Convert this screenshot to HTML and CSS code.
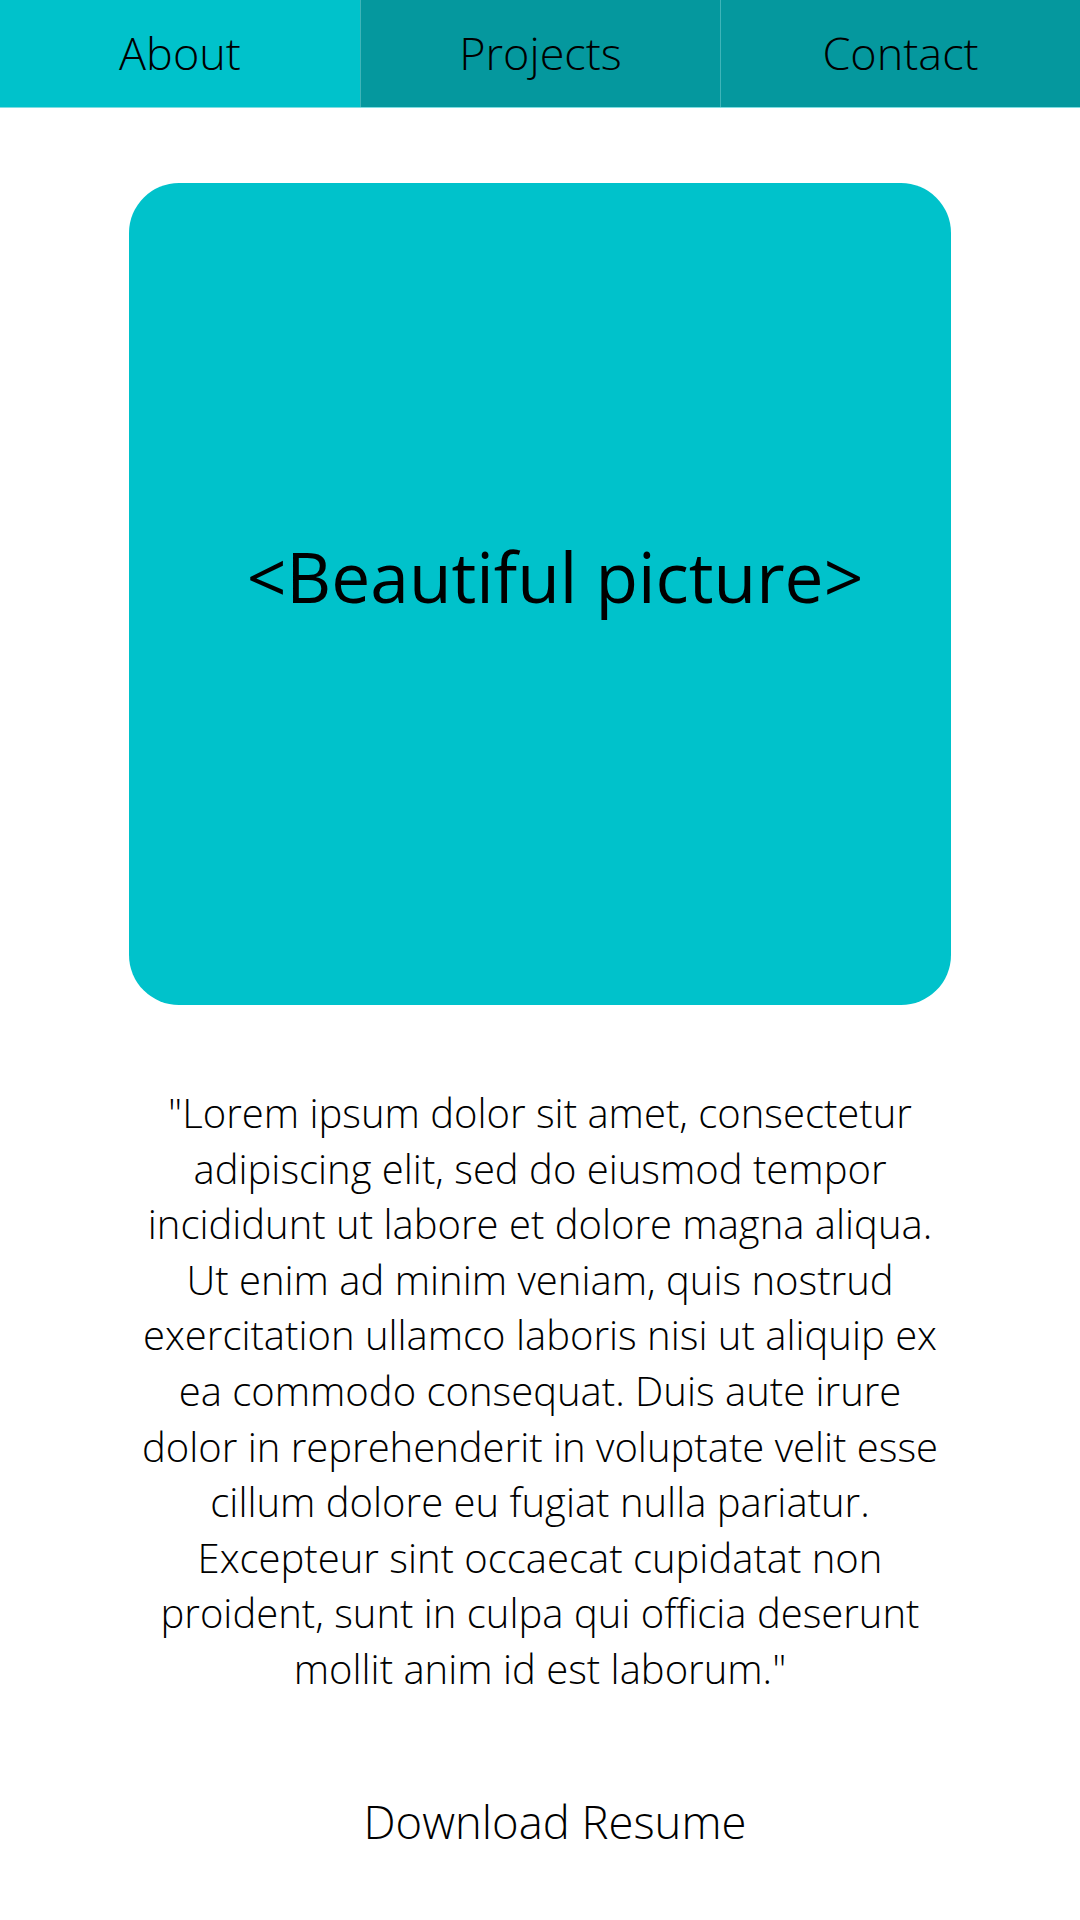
FILE: index.html
```html
<!DOCTYPE html>
<html lang="en">
<head>
<meta charset="utf-8">
<title>Portfolio</title>
<link rel="stylesheet" href="styles.css">
</head>
<body>
<nav class="nav">
  <a class="tab tab-active" href="#">About</a>
  <a class="tab" href="#">Projects</a>
  <a class="tab" href="#">Contact</a>
</nav>
<main class="main">
  <div class="picture"><span class="picture-label">&lt;Beautiful picture&gt;</span></div>
  <p class="quote">"Lorem ipsum dolor sit amet, consectetur adipiscing elit, sed do eiusmod tempor incididunt ut labore et dolore magna aliqua. Ut enim ad minim veniam, quis nostrud exercitation ullamco laboris nisi ut aliquip ex ea commodo consequat. Duis aute irure dolor in reprehenderit in voluptate velit esse cillum dolore eu fugiat nulla pariatur. Excepteur sint occaecat cupidatat non proident, sunt in culpa qui officia deserunt mollit anim id est laborum."</p>
  <a class="download" href="#">Download Resume</a>
</main>
</body>
</html>
```

FILE: styles.css
```css
* { box-sizing: border-box; }
html, body {
  margin: 0;
  padding: 0;
  background: #ffffff;
  font-family: "Open Sans", "Noto Sans", sans-serif;
  color: #000;
}
.nav {
  display: grid;
  grid-template-columns: repeat(3, 1fr);
  height: 108px;
  border-bottom: 1px solid #7fdde2;
}
.tab {
  display: flex;
  align-items: center;
  justify-content: center;
  background: #05989e;
  color: #000;
  text-decoration: none;
  font-weight: 300;
  font-size: 45px;
  padding-bottom: 2px;
  border-left: 1px solid #3fb5b9;
}
.tab-active {
  background: #00c2cb;
  border-left: none;
}
.main {
  display: flex;
  flex-direction: column;
  align-items: center;
  padding-top: 75px;
}
.picture {
  width: 822px;
  height: 822px;
  background: #00c2cb;
  border-radius: 50px;
  display: flex;
  align-items: center;
  justify-content: center;
  padding-left: 30px;
  padding-bottom: 36px;
}
.picture-label {
  font-size: 69.5px;
  font-weight: 400;
}
.quote {
  width: 822px;
  margin: 80px 0 0;
  text-align: center;
  font-weight: 300;
  font-size: 40px;
  line-height: 55.6px;
}
.download {
  margin-top: 93px;
  padding-left: 30px;
  color: #000;
  text-decoration: none;
  font-weight: 300;
  font-size: 45.4px;
}
```
